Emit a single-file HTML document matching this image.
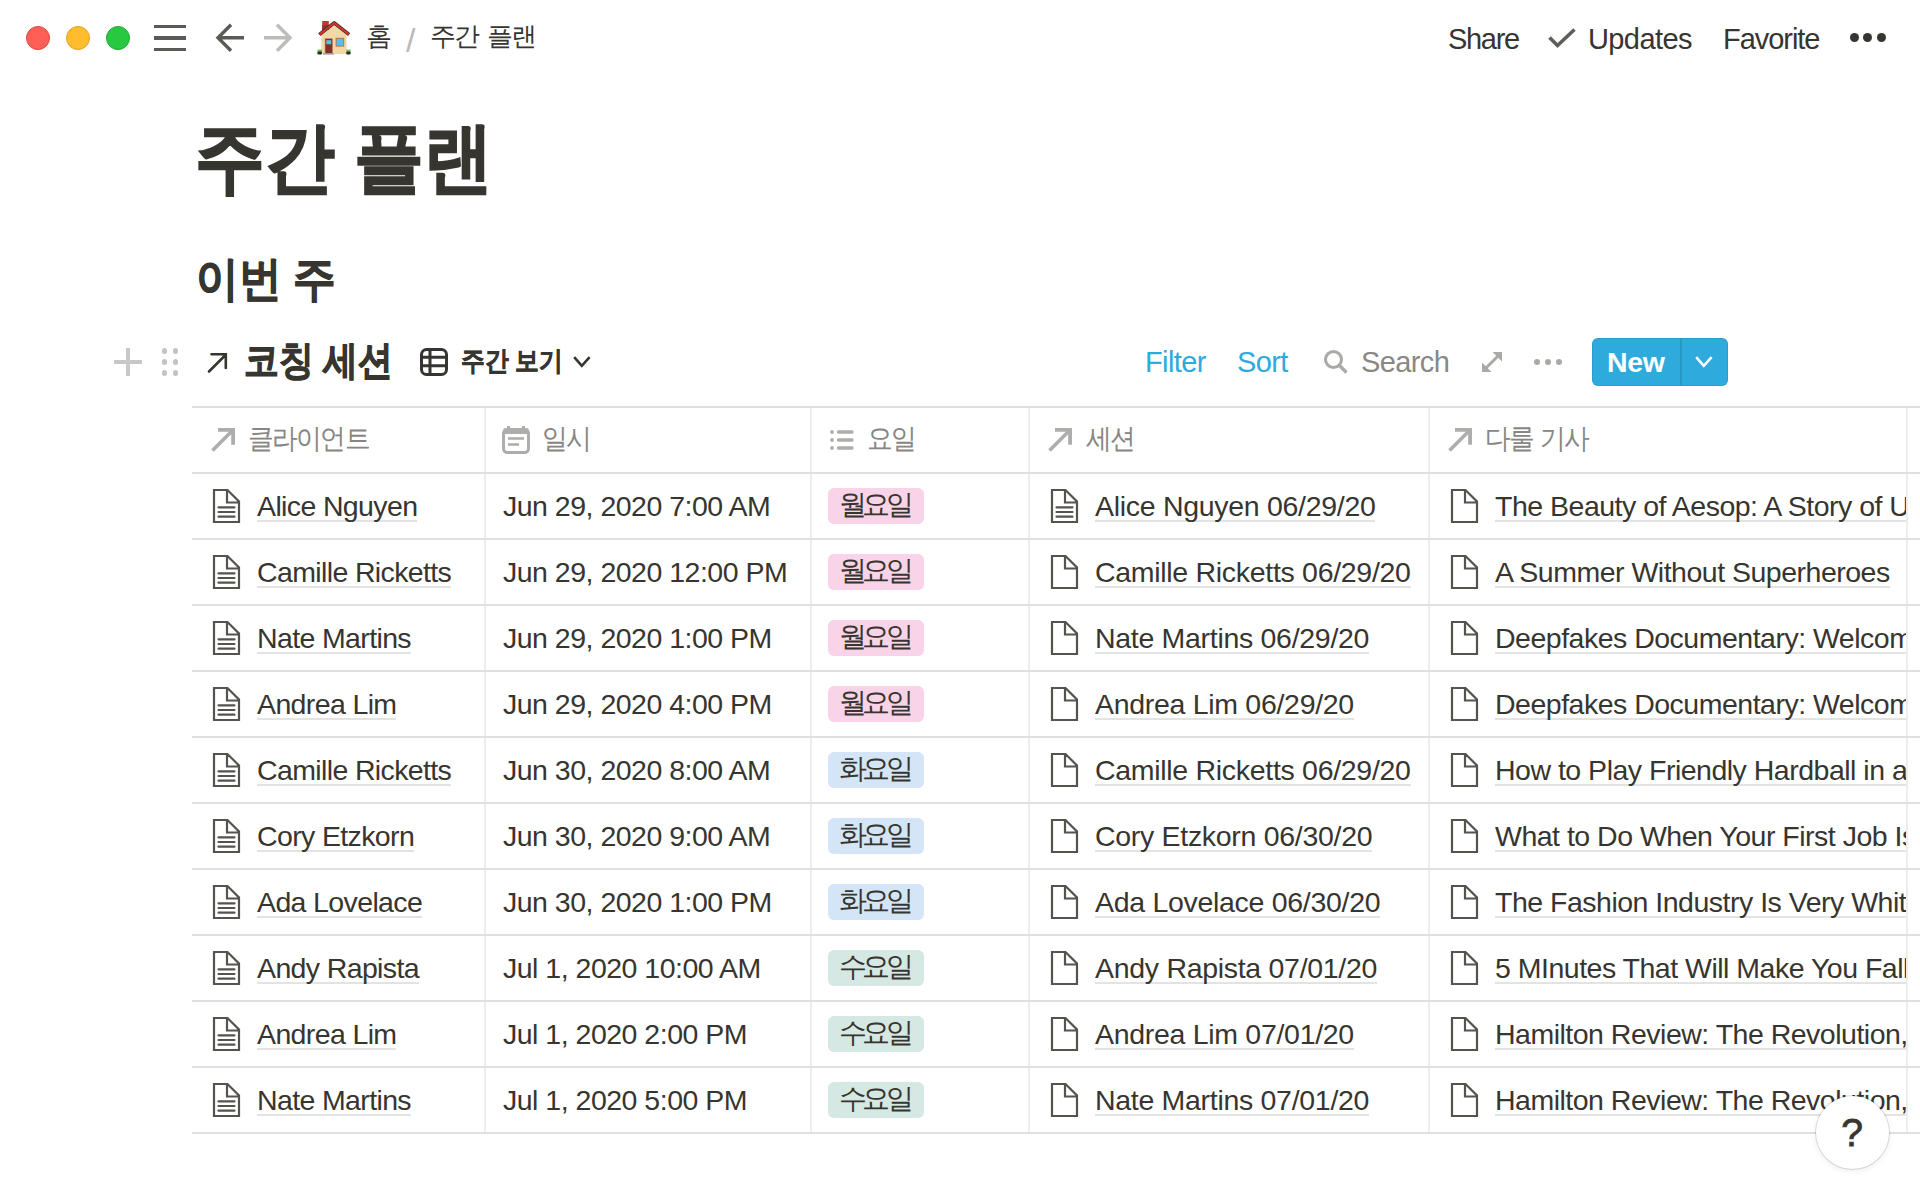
<!DOCTYPE html>
<html><head><meta charset="utf-8">
<style>
html,body{margin:0;padding:0;background:#fff;}
body{width:1920px;height:1200px;overflow:hidden;position:relative;font-family:"Liberation Sans",sans-serif;color:rgb(55,53,47);}
.a{position:absolute;white-space:nowrap;}
.tl{position:absolute;width:24px;height:24px;border-radius:50%;top:26px;box-sizing:border-box;}
svg{position:absolute;overflow:visible;}
.cell{position:absolute;white-space:nowrap;line-height:34px;}
.link{box-shadow:inset 0 -2px 0 #e3e3e1;}
.pill{position:absolute;width:92px;padding-right:4px;height:36px;border-radius:6px;line-height:32px;text-align:center;}
.hdr{position:absolute;white-space:nowrap;line-height:30px;color:rgb(135,134,130);word-spacing:3px;transform-origin:0 0;transform:scaleX(0.92)}
</style></head>
<body>

<div class="tl" style="left:26px;background:#fe5f57;border:1px solid #e2463f;"></div>
<div class="tl" style="left:66px;background:#febc2e;border:1px solid #e1a325;"></div>
<div class="tl" style="left:106px;background:#28c840;border:1px solid #1fad2e;"></div>
<div class="a" style="left:154px;top:24.8px;width:32px;height:3.2px;background:#5b5a55"></div>
<div class="a" style="left:154px;top:36.2px;width:32px;height:3.4px;background:#5b5a55"></div>
<div class="a" style="left:154px;top:47.9px;width:32px;height:3.2px;background:#5b5a55"></div>
<svg style="left:216px;top:24px" width="28" height="28" viewBox="0 0 28 28"><path d="M28 13.8H3 M15 0.8L2 13.8L15 26.8" fill="none" stroke="#5b5a55" stroke-width="3.4"/></svg>
<svg style="left:264px;top:24px" width="28" height="28" viewBox="0 0 28 28"><path d="M0 13.8H25 M13 0.8L26 13.8L13 26.8" fill="none" stroke="#bdbcba" stroke-width="3.4"/></svg>
<svg style="left:312px;top:16px" width="44" height="44" viewBox="0 0 44 44"><rect x="10.2" y="5" width="6.6" height="9" fill="#c9352b"/><rect x="10.2" y="9" width="6.6" height="5" fill="#8e3a2a"/><path d="M9.4 19.3L22.2 9.3L34.6 19.3V38H9.4Z" fill="#f3d7a6"/><path d="M7.3 18.6L22.2 6.8L37.1 18.6" fill="none" stroke="#3a2e28" stroke-width="3.6" stroke-linejoin="round"/><path d="M7.6 18.4L22.2 6.9L36.8 18.4" fill="none" stroke="#d8342b" stroke-width="2"/><rect x="12.6" y="22" width="8.4" height="15.5" fill="#d9a877"/><rect x="13.3" y="22.8" width="7" height="14.5" fill="#7e3326"/><rect x="14.3" y="24.2" width="4.9" height="4" fill="#5cc0f0"/><rect x="23.6" y="21.8" width="8.6" height="8.8" fill="#b07a50"/><rect x="24.6" y="22.8" width="6.6" height="6.8" fill="#56bff2"/><rect x="5.4" y="33.6" width="4.6" height="2.2" fill="#5bc84a"/><rect x="5.4" y="35.5" width="4.6" height="3" rx="1" fill="#2b2b2b"/><rect x="34.2" y="33.6" width="4.4" height="2.2" fill="#5bc84a"/><rect x="34.2" y="35.5" width="4.4" height="3" rx="1" fill="#2b2b2b"/><rect x="11" y="37.2" width="11" height="1.4" fill="#9b9b9b"/></svg>
<div class="a" style="left:366px;top:18px;font-size:26px;line-height:36px;">홈</div>
<div class="a" style="left:406px;top:22px;font-size:34px;line-height:36px;color:#bbbab8;font-weight:300">/</div>
<div class="a" style="left:430px;top:18px;font-size:26px;line-height:36px;letter-spacing:-1.7px;word-spacing:3px">주간 플랜</div>
<div class="a" style="left:1448px;top:21px;font-size:29px;line-height:36px;letter-spacing:-1.3px">Share</div>
<svg style="left:1548px;top:28px" width="28" height="20" viewBox="0 0 28 20"><path d="M1.5 9.5L9.5 17.5L26.5 1.5" fill="none" stroke="#5f5e5a" stroke-width="3.6"/></svg>
<div class="a" style="left:1588px;top:21px;font-size:29px;line-height:36px;letter-spacing:-0.6px">Updates</div>
<div class="a" style="left:1723px;top:21px;font-size:29px;line-height:36px;letter-spacing:-1.05px">Favorite</div>
<div class="a" style="left:1850px;top:33px;width:9px;height:9px;border-radius:50%;background:rgb(55,53,47)"></div>
<div class="a" style="left:1863px;top:33px;width:9px;height:9px;border-radius:50%;background:rgb(55,53,47)"></div>
<div class="a" style="left:1877px;top:33px;width:9px;height:9px;border-radius:50%;background:rgb(55,53,47)"></div>
<div class="a" style="left:195px;top:106.5px;font-size:77.2px;line-height:100px;font-weight:700;-webkit-text-stroke:1.6px rgb(55,53,47);transform-origin:0 0;transform:scaleX(0.905)">주간 플랜</div>
<div class="a" style="left:196px;top:248.5px;font-size:46.5px;line-height:60px;font-weight:700;-webkit-text-stroke:0.9px rgb(55,53,47);transform-origin:0 0;transform:scaleX(0.906)">이번 주</div>
<div class="a" style="left:126px;top:348px;width:3.5px;height:28px;background:#c8c8c6"></div>
<div class="a" style="left:114px;top:360px;width:28px;height:3.5px;background:#c8c8c6"></div>
<div class="a" style="left:161.55px;top:348.25px;width:5.5px;height:5.5px;border-radius:50%;background:#c3c3c1"></div>
<div class="a" style="left:161.55px;top:359.25px;width:5.5px;height:5.5px;border-radius:50%;background:#c3c3c1"></div>
<div class="a" style="left:161.55px;top:370.25px;width:5.5px;height:5.5px;border-radius:50%;background:#c3c3c1"></div>
<div class="a" style="left:172.75px;top:348.25px;width:5.5px;height:5.5px;border-radius:50%;background:#c3c3c1"></div>
<div class="a" style="left:172.75px;top:359.25px;width:5.5px;height:5.5px;border-radius:50%;background:#c3c3c1"></div>
<div class="a" style="left:172.75px;top:370.25px;width:5.5px;height:5.5px;border-radius:50%;background:#c3c3c1"></div>
<svg style="left:208px;top:353px" width="20" height="20" viewBox="0 0 20 20"><path d="M1 18.5L17.5 2 M3.5 1.3H17.8V15" fill="none" stroke="rgb(55,53,47)" stroke-width="2.6" stroke-linecap="round"/></svg>
<div class="a" style="left:244px;top:335.5px;font-size:39.5px;line-height:48px;font-weight:700;-webkit-text-stroke:1px rgb(55,53,47);transform-origin:0 0;transform:scaleX(0.87)">코칭 세션</div>
<svg style="left:420px;top:348px" width="28" height="28" viewBox="0 0 28 28"><rect x="1.5" y="1.5" width="25" height="25" rx="5" fill="none" stroke="rgb(55,53,47)" stroke-width="3"/><path d="M10 1.5V26.5 M1.5 9.3H26.5 M1.5 17.7H26.5" stroke="rgb(55,53,47)" stroke-width="3"/></svg>
<div class="a" style="left:461px;top:343.5px;font-size:27px;line-height:34px;font-weight:700;-webkit-text-stroke:0.5px rgb(55,53,47);transform-origin:0 0;transform:scaleX(0.88)">주간 보기</div>
<svg style="left:573px;top:356px" width="18" height="12" viewBox="0 0 18 12"><path d="M1.2 1.2L8.8 9.8L16.6 1.2" fill="none" stroke="rgb(55,53,47)" stroke-width="2.6"/></svg>
<div class="a" style="left:1145px;top:343.5px;font-size:29px;line-height:36px;color:rgb(46,170,220);letter-spacing:-0.6px">Filter</div>
<div class="a" style="left:1237px;top:344px;font-size:29px;line-height:36px;color:rgb(46,170,220);letter-spacing:-0.6px">Sort</div>
<svg style="left:1323px;top:349px" width="26" height="26" viewBox="0 0 26 26"><circle cx="10.5" cy="10.5" r="8" fill="none" stroke="#aaa9a6" stroke-width="3"/><path d="M16.5 16.5L23.5 23.5" stroke="#aaa9a6" stroke-width="3.4"/></svg>
<div class="a" style="left:1361px;top:344px;font-size:29px;line-height:36px;color:rgb(137,136,132);letter-spacing:-0.6px">Search</div>
<svg style="left:1482px;top:352px" width="20" height="20" viewBox="0 0 20 20"><path d="M20 0V9.5L10.5 0Z M0 20V10.5L9.5 20Z" fill="#aaa9a6"/><path d="M3 17L17 3" stroke="#aaa9a6" stroke-width="3"/></svg>
<div class="a" style="left:1533.8px;top:358.5px;width:6.4px;height:6.4px;border-radius:50%;background:#aaa9a6"></div>
<div class="a" style="left:1544.8px;top:358.5px;width:6.4px;height:6.4px;border-radius:50%;background:#aaa9a6"></div>
<div class="a" style="left:1555.8px;top:358.5px;width:6.4px;height:6.4px;border-radius:50%;background:#aaa9a6"></div>
<div class="a" style="left:1592px;top:338px;width:136px;height:48px;border-radius:6px;background:rgb(46,170,220);box-shadow:inset 0 0 0 1px rgba(15,15,15,0.08)"></div>
<div class="a" style="left:1680px;top:338px;width:2px;height:48px;background:rgb(40,152,198)"></div>
<div class="a" style="left:1607px;top:344px;font-size:28.5px;line-height:36px;color:#fff;font-weight:700;letter-spacing:-0.4px">New</div>
<svg style="left:1695px;top:356px" width="18" height="12" viewBox="0 0 18 12"><path d="M1.2 1.2L8.8 9.8L16.6 1.2" fill="none" stroke="#fff" stroke-width="2.6"/></svg>
<div class="a" style="left:484px;top:407px;width:2px;height:726px;background:#ededec"></div>
<div class="a" style="left:810px;top:407px;width:2px;height:726px;background:#ededec"></div>
<div class="a" style="left:1028px;top:407px;width:2px;height:726px;background:#ededec"></div>
<div class="a" style="left:1428px;top:407px;width:2px;height:726px;background:#ededec"></div>
<div class="a" style="left:1906px;top:407px;width:2px;height:726px;background:#ededec"></div>
<div class="a" style="left:192px;top:406px;width:1728px;height:2px;background:#e0e0de"></div>
<div class="a" style="left:192px;top:472px;width:1728px;height:2px;background:#e0e0de"></div>
<div class="a" style="left:192px;top:538px;width:1728px;height:2px;background:#e0e0de"></div>
<div class="a" style="left:192px;top:604px;width:1728px;height:2px;background:#e0e0de"></div>
<div class="a" style="left:192px;top:670px;width:1728px;height:2px;background:#e0e0de"></div>
<div class="a" style="left:192px;top:736px;width:1728px;height:2px;background:#e0e0de"></div>
<div class="a" style="left:192px;top:802px;width:1728px;height:2px;background:#e0e0de"></div>
<div class="a" style="left:192px;top:868px;width:1728px;height:2px;background:#e0e0de"></div>
<div class="a" style="left:192px;top:934px;width:1728px;height:2px;background:#e0e0de"></div>
<div class="a" style="left:192px;top:1000px;width:1728px;height:2px;background:#e0e0de"></div>
<div class="a" style="left:192px;top:1066px;width:1728px;height:2px;background:#e0e0de"></div>
<div class="a" style="left:192px;top:1132px;width:1728px;height:2px;background:#e0e0de"></div>
<svg style="left:211px;top:428px" width="24" height="24" viewBox="0 0 24 24"><path d="M1.5 22.5L21 3" stroke="#aeadab" stroke-width="3.6"/><path d="M7 0H24V16.8H20.2V3.8H7Z" fill="#aeadab"/></svg>
<div class="hdr" style="left:248px;top:423.5px;font-size:28px;letter-spacing:-1.75px">클라이언트</div>
<svg style="left:502px;top:426px" width="28" height="28" viewBox="0 0 28 28"><rect x="1.5" y="3.5" width="25" height="23" rx="4" fill="none" stroke="#aeadab" stroke-width="3"/><rect x="1.5" y="2" width="25" height="6" rx="2" fill="#aeadab"/><rect x="5" y="0" width="3" height="4" fill="#aeadab"/><rect x="20" y="0" width="3" height="4" fill="#aeadab"/><path d="M6 12.5H22 M6 18.5H17" stroke="#aeadab" stroke-width="2.6"/></svg>
<div class="hdr" style="left:542px;top:423.5px;font-size:28px;letter-spacing:-1.75px">일시</div>
<svg style="left:830px;top:430px" width="24" height="20" viewBox="0 0 24 20"><circle cx="2" cy="2" r="1.9" fill="#aeadab"/><circle cx="2" cy="10" r="1.9" fill="#aeadab"/><circle cx="2" cy="18" r="1.9" fill="#aeadab"/><path d="M8.5 2H22 M8.5 10H22 M8.5 18H22" stroke="#aeadab" stroke-width="3.4" stroke-linecap="round"/></svg>
<div class="hdr" style="left:867px;top:423.5px;font-size:28px;letter-spacing:-1.75px">요일</div>
<svg style="left:1048px;top:428px" width="24" height="24" viewBox="0 0 24 24"><path d="M1.5 22.5L21 3" stroke="#aeadab" stroke-width="3.6"/><path d="M7 0H24V16.8H20.2V3.8H7Z" fill="#aeadab"/></svg>
<div class="hdr" style="left:1086px;top:423.5px;font-size:28px;letter-spacing:-1.75px">세션</div>
<svg style="left:1448px;top:428px" width="24" height="24" viewBox="0 0 24 24"><path d="M1.5 22.5L21 3" stroke="#aeadab" stroke-width="3.6"/><path d="M7 0H24V16.8H20.2V3.8H7Z" fill="#aeadab"/></svg>
<div class="hdr" style="left:1485px;top:423.5px;font-size:28px;letter-spacing:-1.75px;word-spacing:1px">다룰 기사</div>
<svg style="left:213px;top:489px" width="28" height="35" viewBox="0 0 28 35"><path d="M1 1H14.5L26 12.5V33H1Z M14 1V13.5H26" fill="none" stroke="#55534e" stroke-width="2.2" stroke-linejoin="miter"/><path d="M5.5 18.3H21.5 M5.5 23H21.5 M5.5 27.7H21.5" stroke="#55534e" stroke-width="2.2" stroke-linecap="round"/></svg>
<div class="cell" style="left:257px;top:489px;font-size:28.5px;letter-spacing:-0.63px"><span class="link">Alice Nguyen</span></div>
<div class="cell" style="left:503px;top:489px;font-size:28.5px;letter-spacing:-0.5px">Jun 29, 2020 7:00 AM</div>
<div class="pill" style="left:828px;top:488px;background:rgb(249,212,232);font-size:28.4px;letter-spacing:-4.4px">월요일</div>
<svg style="left:1051px;top:489px" width="28" height="35" viewBox="0 0 28 35"><path d="M1 1H14.5L26 12.5V33H1Z M14 1V13.5H26" fill="none" stroke="#55534e" stroke-width="2.2" stroke-linejoin="miter"/><path d="M5.5 18.3H21.5 M5.5 23H21.5 M5.5 27.7H21.5" stroke="#55534e" stroke-width="2.2" stroke-linecap="round"/></svg>
<div class="cell" style="left:1095px;top:489px;font-size:28.5px;letter-spacing:-0.3px"><span class="link">Alice Nguyen 06/29/20</span></div>
<svg style="left:1451px;top:489px" width="28" height="35" viewBox="0 0 28 35"><path d="M1 1H14.5L26 12.5V33H1Z M14 1V13.5H26" fill="none" stroke="#55534e" stroke-width="2.2" stroke-linejoin="miter"/></svg>
<div class="cell" style="left:1495px;top:489px;width:411px;overflow:hidden;font-size:28.5px;letter-spacing:-0.5px"><span class="link">The Beauty of Aesop: A Story of Unconventional Success</span></div>
<svg style="left:213px;top:555px" width="28" height="35" viewBox="0 0 28 35"><path d="M1 1H14.5L26 12.5V33H1Z M14 1V13.5H26" fill="none" stroke="#55534e" stroke-width="2.2" stroke-linejoin="miter"/><path d="M5.5 18.3H21.5 M5.5 23H21.5 M5.5 27.7H21.5" stroke="#55534e" stroke-width="2.2" stroke-linecap="round"/></svg>
<div class="cell" style="left:257px;top:555px;font-size:28.5px;letter-spacing:-0.63px"><span class="link">Camille Ricketts</span></div>
<div class="cell" style="left:503px;top:555px;font-size:28.5px;letter-spacing:-0.5px">Jun 29, 2020 12:00 PM</div>
<div class="pill" style="left:828px;top:554px;background:rgb(249,212,232);font-size:28.4px;letter-spacing:-4.4px">월요일</div>
<svg style="left:1051px;top:555px" width="28" height="35" viewBox="0 0 28 35"><path d="M1 1H14.5L26 12.5V33H1Z M14 1V13.5H26" fill="none" stroke="#55534e" stroke-width="2.2" stroke-linejoin="miter"/></svg>
<div class="cell" style="left:1095px;top:555px;font-size:28.5px;letter-spacing:-0.3px"><span class="link">Camille Ricketts 06/29/20</span></div>
<svg style="left:1451px;top:555px" width="28" height="35" viewBox="0 0 28 35"><path d="M1 1H14.5L26 12.5V33H1Z M14 1V13.5H26" fill="none" stroke="#55534e" stroke-width="2.2" stroke-linejoin="miter"/></svg>
<div class="cell" style="left:1495px;top:555px;width:411px;overflow:hidden;font-size:28.5px;letter-spacing:-0.5px"><span class="link">A Summer Without Superheroes</span></div>
<svg style="left:213px;top:621px" width="28" height="35" viewBox="0 0 28 35"><path d="M1 1H14.5L26 12.5V33H1Z M14 1V13.5H26" fill="none" stroke="#55534e" stroke-width="2.2" stroke-linejoin="miter"/><path d="M5.5 18.3H21.5 M5.5 23H21.5 M5.5 27.7H21.5" stroke="#55534e" stroke-width="2.2" stroke-linecap="round"/></svg>
<div class="cell" style="left:257px;top:621px;font-size:28.5px;letter-spacing:-0.63px"><span class="link">Nate Martins</span></div>
<div class="cell" style="left:503px;top:621px;font-size:28.5px;letter-spacing:-0.5px">Jun 29, 2020 1:00 PM</div>
<div class="pill" style="left:828px;top:620px;background:rgb(249,212,232);font-size:28.4px;letter-spacing:-4.4px">월요일</div>
<svg style="left:1051px;top:621px" width="28" height="35" viewBox="0 0 28 35"><path d="M1 1H14.5L26 12.5V33H1Z M14 1V13.5H26" fill="none" stroke="#55534e" stroke-width="2.2" stroke-linejoin="miter"/></svg>
<div class="cell" style="left:1095px;top:621px;font-size:28.5px;letter-spacing:-0.3px"><span class="link">Nate Martins 06/29/20</span></div>
<svg style="left:1451px;top:621px" width="28" height="35" viewBox="0 0 28 35"><path d="M1 1H14.5L26 12.5V33H1Z M14 1V13.5H26" fill="none" stroke="#55534e" stroke-width="2.2" stroke-linejoin="miter"/></svg>
<div class="cell" style="left:1495px;top:621px;width:411px;overflow:hidden;font-size:28.5px;letter-spacing:-0.5px"><span class="link">Deepfakes Documentary: Welcome to Chechnya</span></div>
<svg style="left:213px;top:687px" width="28" height="35" viewBox="0 0 28 35"><path d="M1 1H14.5L26 12.5V33H1Z M14 1V13.5H26" fill="none" stroke="#55534e" stroke-width="2.2" stroke-linejoin="miter"/><path d="M5.5 18.3H21.5 M5.5 23H21.5 M5.5 27.7H21.5" stroke="#55534e" stroke-width="2.2" stroke-linecap="round"/></svg>
<div class="cell" style="left:257px;top:687px;font-size:28.5px;letter-spacing:-0.63px"><span class="link">Andrea Lim</span></div>
<div class="cell" style="left:503px;top:687px;font-size:28.5px;letter-spacing:-0.5px">Jun 29, 2020 4:00 PM</div>
<div class="pill" style="left:828px;top:686px;background:rgb(249,212,232);font-size:28.4px;letter-spacing:-4.4px">월요일</div>
<svg style="left:1051px;top:687px" width="28" height="35" viewBox="0 0 28 35"><path d="M1 1H14.5L26 12.5V33H1Z M14 1V13.5H26" fill="none" stroke="#55534e" stroke-width="2.2" stroke-linejoin="miter"/></svg>
<div class="cell" style="left:1095px;top:687px;font-size:28.5px;letter-spacing:-0.3px"><span class="link">Andrea Lim 06/29/20</span></div>
<svg style="left:1451px;top:687px" width="28" height="35" viewBox="0 0 28 35"><path d="M1 1H14.5L26 12.5V33H1Z M14 1V13.5H26" fill="none" stroke="#55534e" stroke-width="2.2" stroke-linejoin="miter"/></svg>
<div class="cell" style="left:1495px;top:687px;width:411px;overflow:hidden;font-size:28.5px;letter-spacing:-0.5px"><span class="link">Deepfakes Documentary: Welcome to Chechnya</span></div>
<svg style="left:213px;top:753px" width="28" height="35" viewBox="0 0 28 35"><path d="M1 1H14.5L26 12.5V33H1Z M14 1V13.5H26" fill="none" stroke="#55534e" stroke-width="2.2" stroke-linejoin="miter"/><path d="M5.5 18.3H21.5 M5.5 23H21.5 M5.5 27.7H21.5" stroke="#55534e" stroke-width="2.2" stroke-linecap="round"/></svg>
<div class="cell" style="left:257px;top:753px;font-size:28.5px;letter-spacing:-0.63px"><span class="link">Camille Ricketts</span></div>
<div class="cell" style="left:503px;top:753px;font-size:28.5px;letter-spacing:-0.5px">Jun 30, 2020 8:00 AM</div>
<div class="pill" style="left:828px;top:752px;background:rgb(211,229,247);font-size:28.4px;letter-spacing:-4.4px">화요일</div>
<svg style="left:1051px;top:753px" width="28" height="35" viewBox="0 0 28 35"><path d="M1 1H14.5L26 12.5V33H1Z M14 1V13.5H26" fill="none" stroke="#55534e" stroke-width="2.2" stroke-linejoin="miter"/></svg>
<div class="cell" style="left:1095px;top:753px;font-size:28.5px;letter-spacing:-0.3px"><span class="link">Camille Ricketts 06/29/20</span></div>
<svg style="left:1451px;top:753px" width="28" height="35" viewBox="0 0 28 35"><path d="M1 1H14.5L26 12.5V33H1Z M14 1V13.5H26" fill="none" stroke="#55534e" stroke-width="2.2" stroke-linejoin="miter"/></svg>
<div class="cell" style="left:1495px;top:753px;width:411px;overflow:hidden;font-size:28.5px;letter-spacing:-0.5px"><span class="link">How to Play Friendly Hardball in a Negotiation</span></div>
<svg style="left:213px;top:819px" width="28" height="35" viewBox="0 0 28 35"><path d="M1 1H14.5L26 12.5V33H1Z M14 1V13.5H26" fill="none" stroke="#55534e" stroke-width="2.2" stroke-linejoin="miter"/><path d="M5.5 18.3H21.5 M5.5 23H21.5 M5.5 27.7H21.5" stroke="#55534e" stroke-width="2.2" stroke-linecap="round"/></svg>
<div class="cell" style="left:257px;top:819px;font-size:28.5px;letter-spacing:-0.63px"><span class="link">Cory Etzkorn</span></div>
<div class="cell" style="left:503px;top:819px;font-size:28.5px;letter-spacing:-0.5px">Jun 30, 2020 9:00 AM</div>
<div class="pill" style="left:828px;top:818px;background:rgb(211,229,247);font-size:28.4px;letter-spacing:-4.4px">화요일</div>
<svg style="left:1051px;top:819px" width="28" height="35" viewBox="0 0 28 35"><path d="M1 1H14.5L26 12.5V33H1Z M14 1V13.5H26" fill="none" stroke="#55534e" stroke-width="2.2" stroke-linejoin="miter"/></svg>
<div class="cell" style="left:1095px;top:819px;font-size:28.5px;letter-spacing:-0.3px"><span class="link">Cory Etzkorn 06/30/20</span></div>
<svg style="left:1451px;top:819px" width="28" height="35" viewBox="0 0 28 35"><path d="M1 1H14.5L26 12.5V33H1Z M14 1V13.5H26" fill="none" stroke="#55534e" stroke-width="2.2" stroke-linejoin="miter"/></svg>
<div class="cell" style="left:1495px;top:819px;width:411px;overflow:hidden;font-size:28.5px;letter-spacing:-0.5px"><span class="link">What to Do When Your First Job Isn't Your Dream Job</span></div>
<svg style="left:213px;top:885px" width="28" height="35" viewBox="0 0 28 35"><path d="M1 1H14.5L26 12.5V33H1Z M14 1V13.5H26" fill="none" stroke="#55534e" stroke-width="2.2" stroke-linejoin="miter"/><path d="M5.5 18.3H21.5 M5.5 23H21.5 M5.5 27.7H21.5" stroke="#55534e" stroke-width="2.2" stroke-linecap="round"/></svg>
<div class="cell" style="left:257px;top:885px;font-size:28.5px;letter-spacing:-0.63px"><span class="link">Ada Lovelace</span></div>
<div class="cell" style="left:503px;top:885px;font-size:28.5px;letter-spacing:-0.5px">Jun 30, 2020 1:00 PM</div>
<div class="pill" style="left:828px;top:884px;background:rgb(211,229,247);font-size:28.4px;letter-spacing:-4.4px">화요일</div>
<svg style="left:1051px;top:885px" width="28" height="35" viewBox="0 0 28 35"><path d="M1 1H14.5L26 12.5V33H1Z M14 1V13.5H26" fill="none" stroke="#55534e" stroke-width="2.2" stroke-linejoin="miter"/></svg>
<div class="cell" style="left:1095px;top:885px;font-size:28.5px;letter-spacing:-0.3px"><span class="link">Ada Lovelace 06/30/20</span></div>
<svg style="left:1451px;top:885px" width="28" height="35" viewBox="0 0 28 35"><path d="M1 1H14.5L26 12.5V33H1Z M14 1V13.5H26" fill="none" stroke="#55534e" stroke-width="2.2" stroke-linejoin="miter"/></svg>
<div class="cell" style="left:1495px;top:885px;width:411px;overflow:hidden;font-size:28.5px;letter-spacing:-0.5px"><span class="link">The Fashion Industry Is Very White</span></div>
<svg style="left:213px;top:951px" width="28" height="35" viewBox="0 0 28 35"><path d="M1 1H14.5L26 12.5V33H1Z M14 1V13.5H26" fill="none" stroke="#55534e" stroke-width="2.2" stroke-linejoin="miter"/><path d="M5.5 18.3H21.5 M5.5 23H21.5 M5.5 27.7H21.5" stroke="#55534e" stroke-width="2.2" stroke-linecap="round"/></svg>
<div class="cell" style="left:257px;top:951px;font-size:28.5px;letter-spacing:-0.63px"><span class="link">Andy Rapista</span></div>
<div class="cell" style="left:503px;top:951px;font-size:28.5px;letter-spacing:-0.5px">Jul 1, 2020 10:00 AM</div>
<div class="pill" style="left:828px;top:950px;background:rgb(214,232,228);font-size:28.4px;letter-spacing:-4.4px">수요일</div>
<svg style="left:1051px;top:951px" width="28" height="35" viewBox="0 0 28 35"><path d="M1 1H14.5L26 12.5V33H1Z M14 1V13.5H26" fill="none" stroke="#55534e" stroke-width="2.2" stroke-linejoin="miter"/></svg>
<div class="cell" style="left:1095px;top:951px;font-size:28.5px;letter-spacing:-0.3px"><span class="link">Andy Rapista 07/01/20</span></div>
<svg style="left:1451px;top:951px" width="28" height="35" viewBox="0 0 28 35"><path d="M1 1H14.5L26 12.5V33H1Z M14 1V13.5H26" fill="none" stroke="#55534e" stroke-width="2.2" stroke-linejoin="miter"/></svg>
<div class="cell" style="left:1495px;top:951px;width:411px;overflow:hidden;font-size:28.5px;letter-spacing:-0.5px"><span class="link">5 MInutes That Will Make You Fall in Love</span></div>
<svg style="left:213px;top:1017px" width="28" height="35" viewBox="0 0 28 35"><path d="M1 1H14.5L26 12.5V33H1Z M14 1V13.5H26" fill="none" stroke="#55534e" stroke-width="2.2" stroke-linejoin="miter"/><path d="M5.5 18.3H21.5 M5.5 23H21.5 M5.5 27.7H21.5" stroke="#55534e" stroke-width="2.2" stroke-linecap="round"/></svg>
<div class="cell" style="left:257px;top:1017px;font-size:28.5px;letter-spacing:-0.63px"><span class="link">Andrea Lim</span></div>
<div class="cell" style="left:503px;top:1017px;font-size:28.5px;letter-spacing:-0.5px">Jul 1, 2020 2:00 PM</div>
<div class="pill" style="left:828px;top:1016px;background:rgb(214,232,228);font-size:28.4px;letter-spacing:-4.4px">수요일</div>
<svg style="left:1051px;top:1017px" width="28" height="35" viewBox="0 0 28 35"><path d="M1 1H14.5L26 12.5V33H1Z M14 1V13.5H26" fill="none" stroke="#55534e" stroke-width="2.2" stroke-linejoin="miter"/></svg>
<div class="cell" style="left:1095px;top:1017px;font-size:28.5px;letter-spacing:-0.3px"><span class="link">Andrea Lim 07/01/20</span></div>
<svg style="left:1451px;top:1017px" width="28" height="35" viewBox="0 0 28 35"><path d="M1 1H14.5L26 12.5V33H1Z M14 1V13.5H26" fill="none" stroke="#55534e" stroke-width="2.2" stroke-linejoin="miter"/></svg>
<div class="cell" style="left:1495px;top:1017px;width:411px;overflow:hidden;font-size:28.5px;letter-spacing:-0.5px"><span class="link">Hamilton Review: The Revolution, Live</span></div>
<svg style="left:213px;top:1083px" width="28" height="35" viewBox="0 0 28 35"><path d="M1 1H14.5L26 12.5V33H1Z M14 1V13.5H26" fill="none" stroke="#55534e" stroke-width="2.2" stroke-linejoin="miter"/><path d="M5.5 18.3H21.5 M5.5 23H21.5 M5.5 27.7H21.5" stroke="#55534e" stroke-width="2.2" stroke-linecap="round"/></svg>
<div class="cell" style="left:257px;top:1083px;font-size:28.5px;letter-spacing:-0.63px"><span class="link">Nate Martins</span></div>
<div class="cell" style="left:503px;top:1083px;font-size:28.5px;letter-spacing:-0.5px">Jul 1, 2020 5:00 PM</div>
<div class="pill" style="left:828px;top:1082px;background:rgb(214,232,228);font-size:28.4px;letter-spacing:-4.4px">수요일</div>
<svg style="left:1051px;top:1083px" width="28" height="35" viewBox="0 0 28 35"><path d="M1 1H14.5L26 12.5V33H1Z M14 1V13.5H26" fill="none" stroke="#55534e" stroke-width="2.2" stroke-linejoin="miter"/></svg>
<div class="cell" style="left:1095px;top:1083px;font-size:28.5px;letter-spacing:-0.3px"><span class="link">Nate Martins 07/01/20</span></div>
<svg style="left:1451px;top:1083px" width="28" height="35" viewBox="0 0 28 35"><path d="M1 1H14.5L26 12.5V33H1Z M14 1V13.5H26" fill="none" stroke="#55534e" stroke-width="2.2" stroke-linejoin="miter"/></svg>
<div class="cell" style="left:1495px;top:1083px;width:411px;overflow:hidden;font-size:28.5px;letter-spacing:-0.5px"><span class="link">Hamilton Review: The Revolution, Live</span></div>
<div class="a" style="left:1815.5px;top:1095.5px;width:73px;height:73px;border-radius:50%;background:#fff;box-shadow:0 0 0 1px rgba(15,15,15,0.13),0 2px 7px rgba(15,15,15,0.08);"></div>
<div class="a" style="left:1815.5px;top:1095.5px;width:73px;height:73px;font-size:39px;line-height:73px;text-align:center;font-weight:400;-webkit-text-stroke:0.8px rgb(55,53,47)">?</div>
</body></html>
